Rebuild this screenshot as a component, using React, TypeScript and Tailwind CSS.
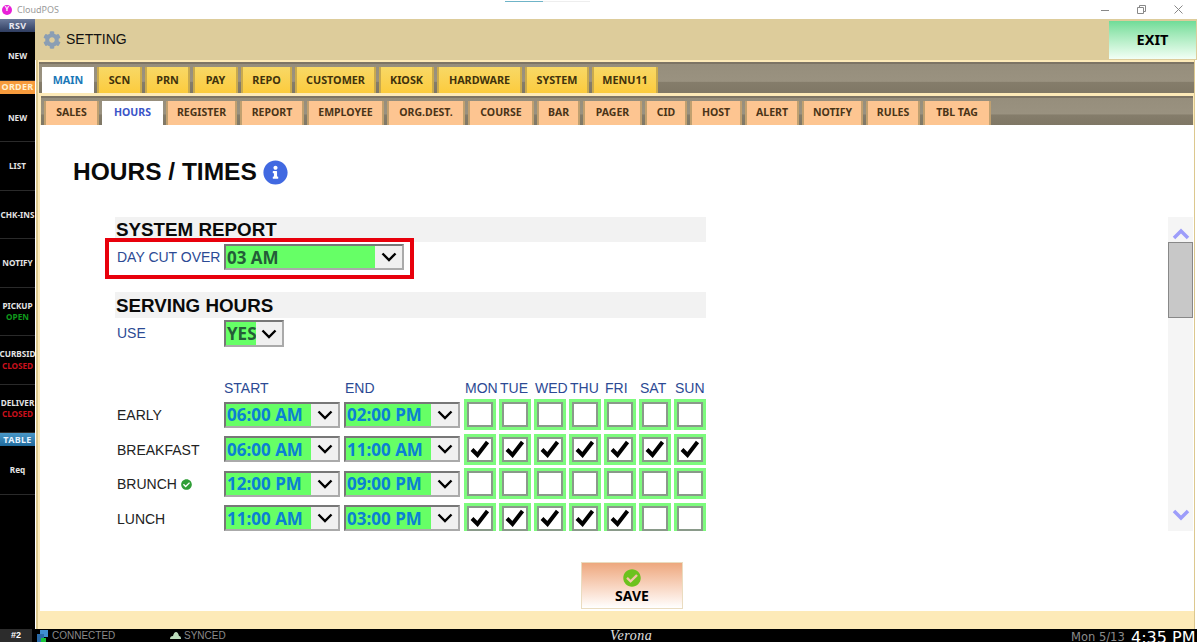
import { FaCog, FaInfoCircle, FaCheckCircle } from 'react-icons/fa';

const MAIN_TABS = [
  { label: 'MAIN', w: 'w-[52px]', active: true },
  { label: 'SCN', w: 'w-[45px]' },
  { label: 'PRN', w: 'w-[45px]' },
  { label: 'PAY', w: 'w-[45px]' },
  { label: 'REPO', w: 'w-[51px]' },
  { label: 'CUSTOMER', w: 'w-[81px]' },
  { label: 'KIOSK', w: 'w-[55px]' },
  { label: 'HARDWARE', w: 'w-[85px]' },
  { label: 'SYSTEM', w: 'w-[64px]' },
  { label: 'MENU11', w: 'w-[66px]' },
];

const SUB_TABS = [
  { label: 'SALES', w: 'w-[55px]' },
  { label: 'HOURS', w: 'w-[61px]', active: true },
  { label: 'REGISTER', w: 'w-[71px]' },
  { label: 'REPORT', w: 'w-[64px]' },
  { label: 'EMPLOYEE', w: 'w-[77px]' },
  { label: 'ORG.DEST.', w: 'w-[78px]' },
  { label: 'COURSE', w: 'w-[66px]' },
  { label: 'BAR', w: 'w-[43px]' },
  { label: 'PAGER', w: 'w-[59px]' },
  { label: 'CID', w: 'w-[42px]' },
  { label: 'HOST', w: 'w-[52px]' },
  { label: 'ALERT', w: 'w-[54px]' },
  { label: 'NOTIFY', w: 'w-[61px]' },
  { label: 'RULES', w: 'w-[54px]' },
  { label: 'TBL TAG', w: 'w-[68px]' },
];

const DAYS = ['MON', 'TUE', 'WED', 'THU', 'FRI', 'SAT', 'SUN'];

const ROWS = [
  { name: 'EARLY', start: '06:00 AM', end: '02:00 PM', days: [0, 0, 0, 0, 0, 0, 0] },
  { name: 'BREAKFAST', start: '06:00 AM', end: '11:00 AM', days: [1, 1, 1, 1, 1, 1, 1] },
  { name: 'BRUNCH', start: '12:00 PM', end: '09:00 PM', days: [0, 0, 0, 0, 0, 0, 0], ok: true },
  { name: 'LUNCH', start: '11:00 AM', end: '03:00 PM', days: [1, 1, 1, 1, 1, 0, 0] },
];

function SideItem({ label, sub, subColor }: { label: string; sub?: string; subColor?: string }) {
  return (
    <div className="h-[48.5px] flex flex-col items-center justify-center border-b border-[#2a2a2a] text-[8.2px] leading-[11.5px] font-bold text-[#e4e4e4] whitespace-nowrap overflow-hidden">
      <span>{label}</span>
      {sub && <span className={subColor}>{sub}</span>}
    </div>
  );
}

function SideBand({ label, className }: { label: string; className: string }) {
  return (
    <div className={`h-[13px] flex items-center justify-center text-[9px] font-bold tracking-[0.3px] ${className}`}>
      {label}
    </div>
  );
}

function Chevron() {
  return (
    <svg width="16" height="10" viewBox="0 0 16 10" fill="none" stroke="black" strokeWidth="2.4">
      <path d="M1.5 1.5 L8 8 L14.5 1.5" />
    </svg>
  );
}

function Select({ value, className, arrow, text }: { value: string; className: string; arrow: string; text: string }) {
  return (
    <div className={`flex border-2 border-t-[#777] border-l-[#777] border-r-[#aaa] border-b-[#aaa] bg-[#66ff66] ${className}`}>
      <div className={`flex-1 pl-[1px] pt-[1px] flex items-center font-bold text-[17px] font-['Open_Sans',sans-serif] whitespace-nowrap overflow-hidden ${text}`}>
        {value}
      </div>
      <div className={`flex items-center justify-center bg-[#f0f0f0] ${arrow}`}>
        <Chevron />
      </div>
    </div>
  );
}

function DayBox({ on }: { on: number }) {
  return (
    <div className="w-[32px] h-[31px] shrink-0 border-[3px] border-[#7dfb7d] bg-white">
      <div className="w-full h-full border-2 border-[#8a9a8a] flex items-center justify-center">
        {on === 1 && (
          <svg width="20" height="18" viewBox="0 0 20 18" fill="none" stroke="black" strokeWidth="4">
            <path d="M2 9.5 L7.5 15 L17.5 2" />
          </svg>
        )}
      </div>
    </div>
  );
}

export default function App() {
  return (
    <div className="w-[1197px] h-[642px] flex flex-col overflow-hidden bg-white font-['Liberation_Sans',sans-serif]">
      {/* Title bar */}
      <div className="relative h-[19px] shrink-0 flex items-center pl-[2px] gap-[5px] font-['Noto_Sans',sans-serif] text-[9px] text-[#9a9a9a]">
        <div className="w-[10px] h-[10px] rounded-full bg-[#e81fd8] flex items-center justify-center text-white text-[7px] font-bold">Y</div>
        <span>CloudPOS</span>
        <div className="absolute left-[505px] top-[1px] w-[38px] h-[1px] bg-[#6fb4c8]" />
        <div className="absolute left-[543px] top-[1px] w-[47px] h-[1px] bg-[#eeeeee]" />
        <div className="absolute right-[2px] top-[5px] flex items-center gap-[28px] pr-[12px] text-[#777]">
          <svg width="8" height="8" viewBox="0 0 8 8" fill="none" stroke="#888"><path d="M0 4.5 H8" /></svg>
          <svg width="9" height="9" viewBox="0 0 9 9" fill="none" stroke="#888"><path d="M0.5 2.5 H6.5 V8.5 H0.5 Z M2.5 2.5 V0.5 H8.5 V6.5 H6.5" /></svg>
          <svg width="9" height="9" viewBox="0 0 9 9" fill="none" stroke="#888"><path d="M0.5 0.5 L8.5 8.5 M8.5 0.5 L0.5 8.5" /></svg>
        </div>
      </div>

      <div className="flex h-[610px] shrink-0">
        {/* Left nav */}
        <div className="w-[35px] shrink-0 bg-black font-['Noto_Sans',sans-serif]">
          <SideBand label="RSV" className="bg-gradient-to-b from-[#6c7b9c] to-[#2f3d60] text-[#e8e8f0]" />
          <SideItem label="NEW" />
          <SideBand label="ORDER" className="bg-[#f79b3c] text-[#fff0d0]" />
          <SideItem label="NEW" />
          <SideItem label="LIST" />
          <SideItem label="CHK-INS" />
          <SideItem label="NOTIFY" />
          <SideItem label="PICKUP" sub="OPEN" subColor="text-[#0f9a1c]" />
          <SideItem label="CURBSID" sub="CLOSED" subColor="text-[#c8101c]" />
          <SideItem label="DELIVER" sub="CLOSED" subColor="text-[#c8101c]" />
          <SideBand label="TABLE" className="bg-gradient-to-b from-[#4a98c8] to-[#1f6a9c] text-[#e8f4ff]" />
          <SideItem label="Req" />
        </div>

        <div className="flex-1 flex flex-col min-w-0">
          {/* Header */}
          <div className="h-[41px] shrink-0 bg-[#ddcc9b] flex items-center justify-between pl-[8px] pr-[1px]">
            <div className="flex items-center gap-[5px]">
              <FaCog className="text-[#8a9eb4] text-[18px]" />
              <span className="text-[14px] text-[#111]">SETTING</span>
            </div>
            <div className="w-[87px] h-[38px] bg-gradient-to-b from-[#6fdc98] to-[#f2fff6] flex items-center justify-center font-['Noto_Sans',sans-serif] font-bold text-[14.5px] text-black">
              EXIT
            </div>
          </div>

          {/* Frame */}
          <div className="flex-1 min-h-0 flex flex-col mr-[2px] ml-[1px] border-l-2 border-r border-[#dcc88e] bg-[#fdeab8] pt-[2px] pl-[1px]">
            <div className="h-[31px] shrink-0 flex gap-[3px] pl-[3px] pt-[3px] border-t-2 border-[#7d7464] bg-[linear-gradient(to_bottom,#968e7c_0%,#9a9280_60%,#857d6b_62%,#7f7765_100%)] font-['Noto_Sans',sans-serif] font-bold text-[10.8px]">
              {MAIN_TABS.map((t) => (
                <div
                  key={t.label}
                  className={`${t.w} h-[26px] shrink-0 flex items-center justify-center border-x-2 ${
                    t.active
                      ? 'bg-white text-[#1b78b8] border-white'
                      : 'bg-gradient-to-b from-[#f8d865] to-[#fccb3c] text-[#40320c] border-[#c9aa4e]'
                  }`}
                >
                  {t.label}
                </div>
              ))}
            </div>

            <div className="h-[3px] shrink-0" />

            <div className="h-[29px] shrink-0 flex gap-[3px] ml-[2px] mr-[1px] pl-[3px] pt-[3px] border-t-2 border-[#7d7464] bg-[linear-gradient(to_bottom,#968e7c_0%,#9a9280_60%,#857d6b_62%,#7f7765_100%)] font-['Noto_Sans',sans-serif] font-bold text-[10.5px]">
              {SUB_TABS.map((t) => (
                <div
                  key={t.label}
                  className={`${t.w} h-[24px] shrink-0 flex items-center justify-center border-x-2 ${
                    t.active
                      ? 'bg-white text-[#3a55c8] border-white'
                      : 'bg-[#fdc591] text-[#4a3418] border-t-0 border-[#c0a070]'
                  }`}
                >
                  {t.label}
                </div>
              ))}
            </div>

            {/* Page body */}
            <div className="h-[486px] shrink-0 bg-white flex flex-col ml-[1px]">
              <div className="h-[28px] mt-[33px] ml-[33px] flex items-center gap-[6px] shrink-0">
                <h1 className="text-[24.5px] font-bold text-[#0a0a0a] leading-none">HOURS / TIMES</h1>
                <FaInfoCircle className="text-[#4169e1] text-[25px]" />
              </div>

              <div className="relative h-[314px] mt-[31px] shrink-0 overflow-hidden">
                {/* Form */}
                <div className="ml-[75px] w-[591px]">
                  <div className="h-[25px] bg-[#f2f2f2] pl-[1px] pb-[1px] flex items-end text-[18.8px] font-bold text-[#0a0a0a] leading-[22px]">SYSTEM REPORT</div>
                  <div className="mt-[2px] h-[26px] flex items-center">
                    <div className="w-[109px] pl-[2px] text-[14px] text-[#2c4a94] whitespace-nowrap">DAY CUT OVER</div>
                    <Select value="03 AM" className="w-[180px] h-[26px]" arrow="w-[27px]" text="text-[#245c38]" />
                  </div>

                  <div className="mt-[22px] h-[26px] bg-[#f2f2f2] pl-[1px] flex items-end text-[18.8px] font-bold text-[#0a0a0a] leading-[24px]">SERVING HOURS</div>
                  <div className="mt-[2px] h-[27px] flex items-center">
                    <div className="w-[109px] pl-[2px] text-[14px] text-[#2c4a94]">USE</div>
                    <Select value="YES" className="w-[60px] h-[27px]" arrow="w-[26px]" text="text-[#245c38]" />
                  </div>

                  <div className="mt-[33px] h-[17px] flex items-center text-[14px] text-[#2c4a94]">
                    <div className="w-[109px]" />
                    <div className="w-[120px]">START</div>
                    <div className="w-[120px] pl-[1px]">END</div>
                    <div className="flex gap-[3px]">
                      {DAYS.map((d) => (
                        <div key={d} className="w-[32px] pl-[1px] whitespace-nowrap">{d}</div>
                      ))}
                    </div>
                  </div>

                  <div className="mt-[2px] flex flex-col gap-[3.5px]">
                    {ROWS.map((r) => (
                      <div key={r.name} className="h-[31px] flex items-center">
                        <div className="w-[109px] pl-[2px] pt-[2px] flex items-center gap-[4px] text-[14px] text-[#222]">
                          {r.name}
                          {r.ok && <FaCheckCircle className="text-[#2f9e36] text-[11px]" />}
                        </div>
                        <Select value={r.start} className="w-[116px] h-[26px]" arrow="w-[27px]" text="text-[#0b80d4]" />
                        <div className="w-[4px]" />
                        <Select value={r.end} className="w-[116px] h-[26px]" arrow="w-[27px]" text="text-[#0b80d4]" />
                        <div className="w-[4px]" />
                        <div className="flex gap-[3px]">
                          {r.days.map((on, i) => (
                            <DayBox key={i} on={on} />
                          ))}
                        </div>
                      </div>
                    ))}
                  </div>
                </div>

                {/* Scrollbar */}
                <div className="absolute right-[1px] top-0 w-[25px] h-full bg-[#f5f5f5] flex flex-col items-center">
                  <svg className="mt-[11px] shrink-0" width="18" height="12" viewBox="0 0 18 12" fill="none" stroke="#9d9dfa" strokeWidth="3.5">
                    <path d="M2 10 L9 3 L16 10" />
                  </svg>
                  <div className="mt-[2px] w-full h-[76px] shrink-0 bg-[#c8c8c8] border border-[#888]" />
                  <svg className="mt-[191px] shrink-0" width="18" height="12" viewBox="0 0 18 12" fill="none" stroke="#9d9dfa" strokeWidth="3.5">
                    <path d="M2 2 L9 9 L16 2" />
                  </svg>
                </div>

                {/* Red highlight */}
                <div className="absolute left-[65px] top-[21px] w-[309px] h-[41px] border-[4px] border-[#e8000c]" />
              </div>

              <div className="mt-[31px] ml-[541px] w-[102px] h-[47px] shrink-0 border border-[#eadcc0] pt-[2px] bg-gradient-to-b from-[#eda77d] to-white flex flex-col items-center justify-center">
                <FaCheckCircle className="text-[#6cc21e] text-[18px] shrink-0" />
                <span className="font-['Noto_Sans',sans-serif] font-bold text-[14px] leading-[18px] text-black">SAVE</span>
              </div>
            </div>
          </div>
        </div>
      </div>

      {/* Status bar */}
      <div className="h-[13px] shrink-0 bg-black flex items-center text-[10px] overflow-hidden">
        <div className="w-[32px] h-full bg-[#2c2c2c] flex items-center justify-center text-white font-bold text-[9px]">#2</div>
        <svg className="ml-[5px]" width="11" height="12" viewBox="0 0 11 12">
          <rect x="3" y="0" width="8" height="7" fill="#3f8fd0" />
          <rect x="0" y="4" width="7" height="8" fill="#2a6aa8" />
          <rect x="4" y="8" width="5" height="4" fill="#19c43a" />
        </svg>
        <span className="ml-[4px] w-[118px] text-[#8a8a8a]">CONNECTED</span>
        <svg width="11" height="9" viewBox="0 0 11 9">
          <path d="M0 8 Q0 5 3 5 Q4 1 6 1 Q8 1 9 5 Q11 5 11 8 Z" fill="#bcdcbc" />
        </svg>
        <span className="ml-[3px] w-[426px] text-[#8a8a8a]">SYNCED</span>
        <span className="w-[460px] font-['Liberation_Serif',serif] italic text-[14px] leading-[13px] tracking-[0.5px] text-[#e0e0e0]">Verona</span>
        <span className="self-start mt-[2px] ml-[1px] w-[60px] font-['DejaVu_Sans',sans-serif] text-[11.5px] leading-[13px] text-[#8a8a8a] whitespace-nowrap">Mon 5/13</span>
        <span className="self-start mt-[1px] font-['DejaVu_Sans',sans-serif] text-[16px] leading-[16px] text-white whitespace-nowrap">4:35 PM</span>
      </div>
    </div>
  );
}
